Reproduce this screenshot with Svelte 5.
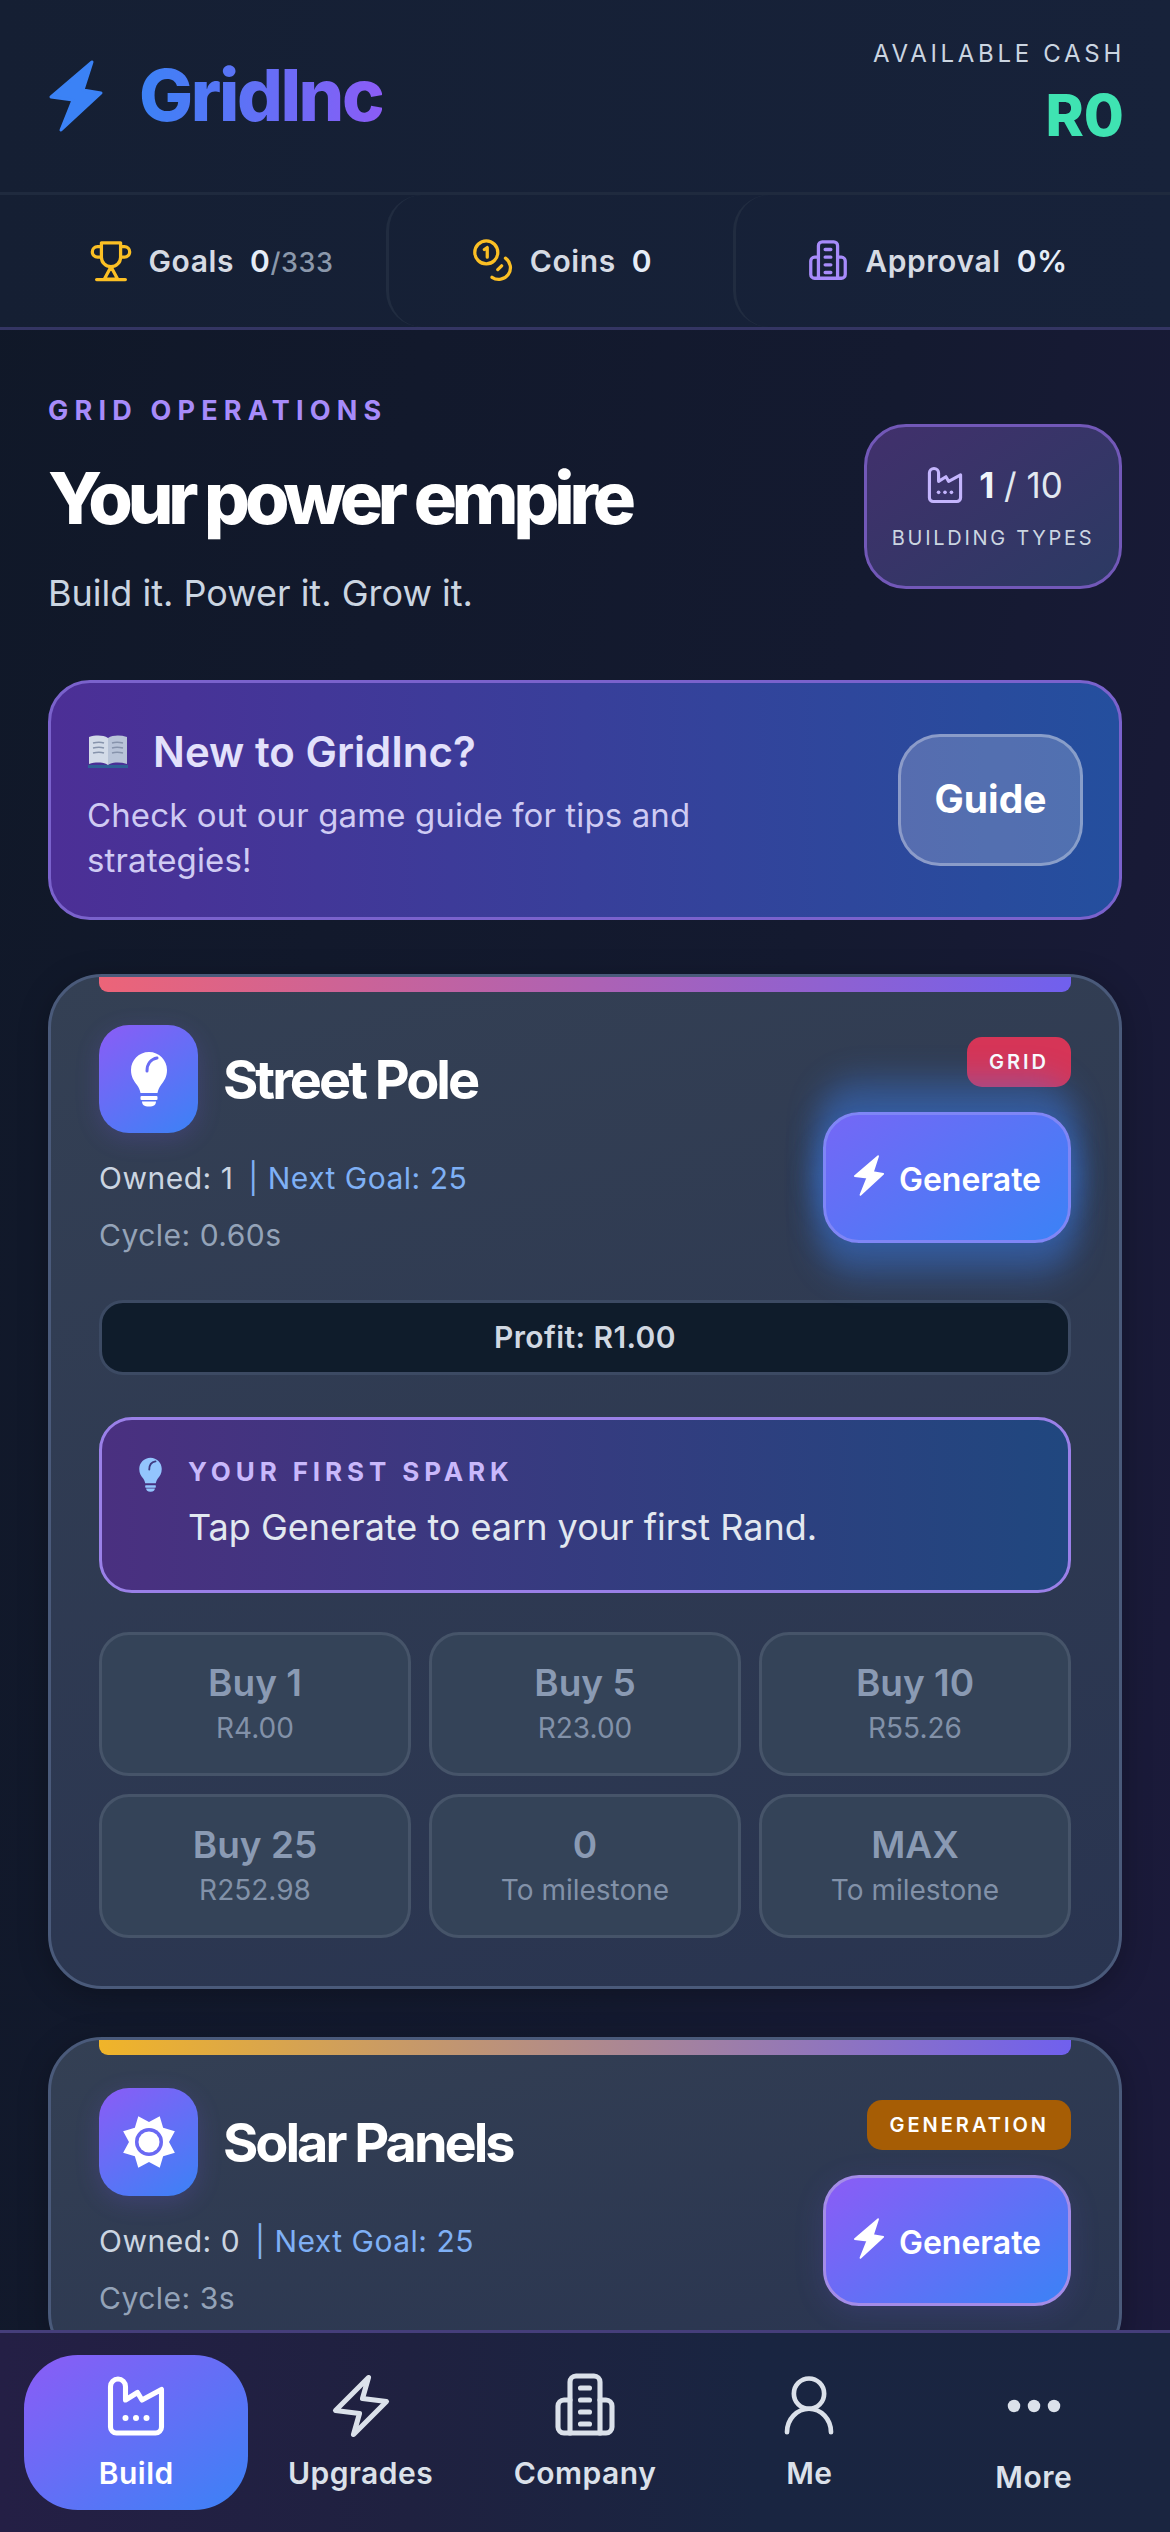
<script>
	const buys = [
		{ title: "Buy 1", sub: "R4.00" },
		{ title: "Buy 5", sub: "R23.00" },
		{ title: "Buy 10", sub: "R55.26" },
		{ title: "Buy 25", sub: "R252.98" },
		{ title: "0", sub: "To milestone" },
		{ title: "MAX", sub: "To milestone" }
	]

	const BOLT = "M44 2 3 37 25 40 13 70 53 33 35 30Z"

	function starPoints(cx, cy, outer, inner, count) {
		const pts = []
		for (let i = 0; i < count * 2; i++) {
			const r = i % 2 ? inner : outer
			const a = (Math.PI * i) / count - Math.PI / 2 + Math.PI / count
			pts.push(`${(cx + r * Math.cos(a)).toFixed(2)},${(cy + r * Math.sin(a)).toFixed(2)}`)
		}
		return pts.join(" ")
	}
</script>

{#snippet factory()}
	<svg class="line" viewBox="0 0 24 24">
		<path d="M3.500 19V5.500a2.500 2.500 0 0 1 5 0V10l4-2.500L14 10l6.500-3.500V19a2 2 0 0 1-2 2h-13a2 2 0 0 1-2-2Z" />
		<circle class="dot" cx="8.500" cy="16" r="1" />
		<circle class="dot" cx="12" cy="16" r="1" />
		<circle class="dot" cx="15.500" cy="16" r="1" />
	</svg>
{/snippet}

{#snippet building()}
	<svg class="line" viewBox="0 0 24 24">
		<path d="M7 21V4a2 2 0 0 1 2-2h6a2 2 0 0 1 2 2v17" />
		<path d="M7 10H5a2 2 0 0 0-2 2v7a2 2 0 0 0 2 2h14a2 2 0 0 0 2-2v-7a2 2 0 0 0-2-2h-2" />
		<path d="M10.500 6h3M10.500 10h3M10.500 14h3M10.500 18h3" />
	</svg>
{/snippet}

{#snippet bulb()}
	<svg class="bulb" viewBox="0 0 38 56">
		<path class="bulb-head" d="M19 1C9 1 1 9 1 19c0 7 3 11 6 15 2 3 3 5 3.500 8h17c.5-3 1.500-5 3.500-8 3-4 6-8 6-15C37 9 29 1 19 1Z" />
		<path class="bulb-cut" d="M27 7c-6 1-10 6-10 13" />
		<rect class="bulb-head" x="10.500" y="45" width="17" height="4" rx="1" />
		<path class="bulb-head" d="M12 50.500h14c0 3-2 5-7 5s-7-2-7-5Z" />
	</svg>
{/snippet}

<div class="page">
	<header class="topbar">
		<div class="brand">
			<svg class="brand-bolt" viewBox="0 0 56 72"><path d={BOLT} /></svg>
			<span class="brand-name">GridInc</span>
		</div>
		<div class="cash">
			<span class="cash-label">AVAILABLE CASH</span>
			<span class="cash-value">R0</span>
		</div>
	</header>

	<div class="stats">
		<div class="stat">
			<svg class="line gold" viewBox="0 0 24 24">
				<path d="M7 2.500h10v7.500a5 5 0 0 1-10 0Z" />
				<path d="M7 4.500H5a2.600 2.600 0 0 0 0 5.500h2M17 4.500h2a2.600 2.600 0 0 1 0 5.500h-2" />
				<path d="M12 15l-3.500 6.500h7L12 15ZM4.500 21.700h15" />
			</svg>
			<span class="stat-name">Goals</span>
			<span class="stat-val">0<small>/333</small></span>
		</div>
		<div class="stat">
			<svg class="line gold" viewBox="0 0 24 24">
				<circle cx="8.500" cy="7.500" r="6" />
				<path d="M7.500 6l1.500-1v5" />
				<path d="M18.500 10.500a6 6 0 0 1-7 10M14.500 16.500l2-2" />
			</svg>
			<span class="stat-name">Coins</span>
			<span class="stat-val">0</span>
		</div>
		<div class="stat">
			<span class="violet">{@render building()}</span>
			<span class="stat-name">Approval</span>
			<span class="stat-val">0%</span>
		</div>
	</div>

	<main class="content">
		<section class="hero">
			<div>
				<div class="eyebrow">GRID OPERATIONS</div>
				<h1>Your power empire</h1>
				<p>Build it. Power it. Grow it.</p>
			</div>
			<div class="types">
				<div class="types-count">
					{@render factory()}
					<span><b>1</b> / 10</span>
				</div>
				<div class="types-label">BUILDING TYPES</div>
			</div>
		</section>

		<section class="guide">
			<div class="guide-text">
				<h2>
					<svg class="book" viewBox="0 0 42 36">
						<path d="M1 31h40v3H1Z" fill="#2f5f96" />
						<path d="M2 3c7-2 14-2 19 1v27c-5-3-12-3-19-1Z" fill="#d3dbe8" />
						<path d="M40 3c-7-2-14-2-19 1v27c5-3 12-3 19-1Z" fill="#b9c4d8" />
						<path d="M6 9c4-1 8-1 11 0M6 14c4-1 8-1 11 0M6 19c4-1 8-1 11 0M25 9c3-1 7-1 11 0M25 14c3-1 7-1 11 0M25 19c3-1 7-1 11 0" stroke="#8794ac" stroke-width="1.500" fill="none" />
					</svg>
					New to GridInc?
				</h2>
				<p>Check out our game guide for tips and strategies!</p>
			</div>
			<button class="guide-btn">Guide</button>
		</section>

		<article class="card">
			<div class="strip strip-red"></div>
			<div class="card-top">
				<div class="card-info">
					<div class="card-title">
						<div class="card-icon">{@render bulb()}</div>
						<h3>Street Pole</h3>
					</div>
					<div class="meta">Owned: 1 <span class="next">| Next Goal: 25</span></div>
					<div class="meta dim">Cycle: 0.60s</div>
				</div>
				<div class="card-actions">
					<span class="tag tag-red">GRID</span>
					<button class="generate glow">
						<svg viewBox="0 0 56 72"><path d={BOLT} /></svg>
						Generate
					</button>
				</div>
			</div>

			<div class="profit">Profit: R1.00</div>

			<div class="spark">
				<div class="spark-icon">{@render bulb()}</div>
				<div>
					<div class="spark-title">YOUR FIRST SPARK</div>
					<div class="spark-text">Tap Generate to earn your first Rand.</div>
				</div>
			</div>

			<div class="buys">
				{#each buys as buy}
					<button class="buy">
						<span class="buy-title">{buy.title}</span>
						<span class="buy-sub">{buy.sub}</span>
					</button>
				{/each}
			</div>
		</article>

		<article class="card second">
			<div class="strip strip-gold"></div>
			<div class="card-top">
				<div class="card-info">
					<div class="card-title">
						<div class="card-icon">
							<svg class="sun" viewBox="0 0 56 56">
								<polygon points={starPoints(28, 28, 28, 20, 8)} fill="#fff" />
								<circle cx="28" cy="28" r="14" fill="#6a69f3" />
								<circle cx="28" cy="28" r="10.500" fill="#fff" />
							</svg>
						</div>
						<h3>Solar Panels</h3>
					</div>
					<div class="meta">Owned: 0 <span class="next">| Next Goal: 25</span></div>
					<div class="meta dim">Cycle: 3s</div>
				</div>
				<div class="card-actions">
					<span class="tag tag-gold">GENERATION</span>
					<button class="generate">
						<svg viewBox="0 0 56 72"><path d={BOLT} /></svg>
						Generate
					</button>
				</div>
			</div>
		</article>
	</main>

	<nav class="tabs">
		<button class="tab active">
			{@render factory()}
			<span>Build</span>
		</button>
		<button class="tab">
			<svg class="line" viewBox="0 0 24 24"><path d="M14.500 2.500 3.500 13.500 11.500 14.500 9.500 21.500 20.500 10.500 12.500 9.500Z" /></svg>
			<span>Upgrades</span>
		</button>
		<button class="tab">
			{@render building()}
			<span>Company</span>
		</button>
		<button class="tab me">
			<svg class="line" viewBox="0 0 24 24">
				<circle cx="12" cy="7.500" r="5.500" />
				<path d="M4 21.500a8 8.500 0 0 1 16 0" />
			</svg>
			<span>Me</span>
		</button>
		<button class="tab more">
			<svg class="line" viewBox="0 0 24 24">
				<circle class="dot" cx="4" cy="12" r="2.500" />
				<circle class="dot" cx="12" cy="12" r="2.500" />
				<circle class="dot" cx="20" cy="12" r="2.500" />
			</svg>
			<span>More</span>
		</button>
	</nav>
</div>

<style>
	:global(body) {
		background: #111827;
	}
	.page {
		position: relative;
		width: 1170px;
		height: 2532px;
		overflow: hidden;
		font-family: Inter, "Noto Sans", sans-serif;
		color: #e2e8f0;
		background: linear-gradient(100deg, #101828 0%, #141a30 60%, #1c1a3c 100%);
	}
	button {
		font-family: inherit;
		cursor: pointer;
	}
	h1,
	h2,
	h3,
	p {
		margin: 0;
	}

	.line {
		display: block;
		fill: none;
		stroke: currentColor;
		stroke-width: 1.7;
		stroke-linecap: round;
		stroke-linejoin: round;
	}
	.line .dot {
		fill: currentColor;
		stroke: none;
	}

	.topbar {
		display: flex;
		justify-content: space-between;
		height: 195px;
		box-sizing: border-box;
		padding: 42px 48px 0;
		background: linear-gradient(90deg, #151f33, #17223a);
		border-bottom: 3px solid #1f2a3e;
	}
	.brand {
		display: flex;
		align-items: flex-start;
		gap: 35px;
		margin-top: 18px;
	}
	.brand-bolt {
		width: 56px;
		height: 72px;
	}
	.brand-bolt path {
		fill: #3b82f6;
		stroke: #3b82f6;
		stroke-width: 3;
		stroke-linejoin: round;
	}
	.brand-name {
		font-size: 72px;
		line-height: 70px;
		font-weight: 800;
		letter-spacing: -2.400px;
		background: linear-gradient(90deg, #3b82f6, #8b5cf6);
		-webkit-background-clip: text;
		background-clip: text;
		color: transparent;
	}
	.cash {
		display: flex;
		flex-direction: column;
		align-items: flex-end;
	}
	.cash-label {
		margin-right: -3px;
		font-size: 24px;
		line-height: 24px;
		letter-spacing: 3.700px;
		color: #cbd5e1;
	}
	.cash-value {
		margin-top: 23px;
		margin-right: -2px;
		font-size: 58px;
		line-height: 52px;
		font-weight: 800;
		color: #3fe3b2;
	}

	.stats {
		display: grid;
		grid-template-columns: 350px 347px 404px;
		height: 132px;
		padding-left: 36px;
		background: linear-gradient(90deg, #151f33, #17223a);
		border-bottom: 3px solid #343563;
	}
	.stat {
		display: flex;
		align-items: center;
		justify-content: center;
		gap: 14px;
		font-size: 30px;
		font-weight: 600;
		letter-spacing: 0.6px;
		border-radius: 36px;
	}
	.stat + .stat {
		border-left: 3px solid #212c40;
	}
	.stat svg {
		width: 46px;
		height: 46px;
	}
	.stat-name {
		color: #d6dbe4;
	}
	.stat-val {
		margin-left: 2px;
		color: #e6edf8;
	}
	.stat-val small {
		font-size: 27px;
		font-weight: 500;
		color: #8b98ab;
	}
	.gold {
		color: #fbbf24;
	}
	.violet {
		color: #a78bfa;
	}

	.content {
		display: flex;
		flex-direction: column;
		padding: 66px 48px 0;
	}
	.hero {
		display: flex;
		justify-content: space-between;
		align-items: flex-start;
	}
	.eyebrow {
		font-size: 27px;
		line-height: 30px;
		font-weight: 700;
		letter-spacing: 6.200px;
		color: #a78bfa;
	}
	h1 {
		margin-top: 30px;
		font-size: 72px;
		line-height: 84px;
		font-weight: 800;
		letter-spacing: -5.100px;
		color: #fff;
	}
	.hero p {
		margin-top: 29px;
		font-size: 36px;
		line-height: 48px;
		color: #cbd5e1;
	}
	.types {
		box-sizing: border-box;
		width: 258px;
		height: 165px;
		margin-top: 28px;
		padding-top: 36px;
		border: 3px solid #7258b8;
		border-radius: 42px;
		background: linear-gradient(145deg, #41306c, #2c3a63);
		text-align: center;
	}
	.types-count {
		display: flex;
		justify-content: center;
		align-items: center;
		gap: 12px;
		font-size: 35px;
		color: #e2e8f0;
	}
	.types-count svg {
		width: 44px;
		height: 44px;
		color: #c4b5fd;
	}
	.types-count b {
		font-weight: 700;
		color: #f1f5f9;
	}
	.types-label {
		margin-top: 19px;
		font-size: 20px;
		letter-spacing: 2.700px;
		color: #cbd5e1;
	}

	.guide {
		display: flex;
		align-items: center;
		justify-content: space-between;
		box-sizing: border-box;
		height: 240px;
		margin-top: 63px;
		padding: 0 36px;
		border: 3px solid #7a62cc;
		border-radius: 42px;
		background: linear-gradient(90deg, #4c2f96, #244f9e);
	}
	.guide-text {
		width: 690px;
		padding-top: 8px;
	}
	.guide h2 {
		display: flex;
		align-items: center;
		gap: 24px;
		font-size: 42px;
		line-height: 54px;
		font-weight: 600;
		color: #e3e1fb;
	}
	.book {
		width: 42px;
		height: 36px;
	}
	.guide p {
		margin-top: 14px;
		font-size: 33px;
		line-height: 45px;
		letter-spacing: 0.12px;
		color: #cfcbf3;
	}
	.guide-btn {
		width: 185px;
		height: 132px;
		padding-bottom: 4px;
		border: 3px solid rgba(255, 255, 255, 0.32);
		border-radius: 42px;
		background: rgba(255, 255, 255, 0.2);
		color: #fff;
		font-size: 39px;
		font-weight: 700;
	}

	.card {
		position: relative;
		box-sizing: border-box;
		margin-top: 54px;
		padding: 48px 48px 48px;
		border: 3px solid #4a5a7a;
		border-radius: 54px;
		background: linear-gradient(165deg, #344054, #293450);
		box-shadow: 0 6px 30px rgba(0, 0, 0, 0.25);
	}
	.second {
		margin-top: 48px;
	}
	.strip {
		position: absolute;
		top: 0;
		left: 48px;
		right: 48px;
		height: 15px;
		border-radius: 0 0 9px 9px;
	}
	.strip-red {
		background: linear-gradient(90deg, #ec6478, #7060ee);
	}
	.strip-gold {
		background: linear-gradient(90deg, #f0b429, #7060ee);
	}
	.card-top {
		display: flex;
		justify-content: space-between;
	}
	.card-title {
		display: flex;
		align-items: center;
		gap: 25px;
	}
	.card-icon {
		display: flex;
		align-items: center;
		justify-content: center;
		width: 99px;
		height: 108px;
		border-radius: 30px;
		background: linear-gradient(145deg, #8b5cf6, #3b82f6);
		box-shadow: 0 6px 24px rgba(124, 92, 246, 0.2);
	}
	.bulb {
		display: block;
		width: 38px;
		height: 56px;
	}
	.bulb-head {
		fill: #fff;
	}
	.bulb-cut {
		fill: none;
		stroke: #6a6cf4;
		stroke-width: 3;
		stroke-linecap: round;
	}
	.sun {
		width: 56px;
		height: 56px;
	}
	h3 {
		font-size: 54px;
		font-weight: 700;
		letter-spacing: -3px;
		color: #fff;
	}
	.meta {
		margin-top: 24px;
		font-size: 30px;
		line-height: 36px;
		letter-spacing: 0.5px;
		color: #cbd5e1;
	}
	.card-title + .meta {
		margin-top: 27px;
	}
	.dim {
		margin-top: 21px;
		color: #94a3b8;
	}
	.next {
		margin-left: 6px;
		color: #7fb0f5;
	}
	.card-actions {
		display: flex;
		flex-direction: column;
		align-items: flex-end;
		padding-top: 12px;
	}
	.tag {
		padding: 0 22px;
		height: 50px;
		line-height: 50px;
		border-radius: 15px;
		font-size: 20px;
		font-weight: 600;
		letter-spacing: 3px;
		color: #fff;
	}
	.tag-red {
		background: #d63557;
	}
	.tag-gold {
		background: #a65d05;
	}
	.generate {
		position: relative;
		display: flex;
		align-items: center;
		justify-content: center;
		gap: 14px;
		width: 248px;
		height: 131px;
		margin-top: 25px;
		padding: 4px 0 0;
		border: 3px solid #a48ce8;
		border-radius: 36px;
		background: linear-gradient(145deg, #8b5cf6, #3b82f6);
		color: #fff;
		font-size: 32px;
		font-weight: 600;
		box-shadow: 0 6px 30px rgba(124, 92, 246, 0.15);
	}
	.generate svg {
		width: 32px;
		height: 41px;
		margin-top: -8px;
		fill: #fff;
		stroke: #fff;
		stroke-width: 3;
		stroke-linejoin: round;
	}
	.glow {
		border-color: #7f86f6;
		background: linear-gradient(145deg, #7567f6, #3b82f6);
		box-shadow:
			0 30px 30px 6px rgba(59, 130, 246, 0.3),
			0 -30px 30px 6px rgba(59, 130, 246, 0.3),
			0 0 30px 8px rgba(59, 130, 246, 0.3);
	}
	.profit {
		box-sizing: border-box;
		height: 75px;
		margin-top: 47px;
		border: 3px solid #3c4a63;
		border-radius: 24px;
		background: #0f1c2b;
		font-size: 30px;
		font-weight: 600;
		line-height: 69px;
		letter-spacing: 0.4px;
		text-align: center;
		color: #d1d8e2;
	}
	.spark {
		display: flex;
		gap: 25px;
		box-sizing: border-box;
		height: 176px;
		margin-top: 42px;
		padding: 36px 0 0 36px;
		border: 3px solid #9a80e8;
		border-radius: 33px;
		background: linear-gradient(90deg, #4a3080, #20477f);
	}
	.spark-icon {
		padding-top: 1px;
	}
	.spark-icon .bulb {
		width: 25px;
		height: 35px;
	}
	.spark-icon .bulb-head {
		fill: #93c5fd;
	}
	.spark-icon .bulb-cut {
		stroke: #3e3a80;
	}
	.spark-title {
		font-size: 26px;
		line-height: 32px;
		font-weight: 700;
		letter-spacing: 4.900px;
		color: #c9b8fb;
	}
	.spark-text {
		margin-top: 16px;
		font-size: 36px;
		line-height: 46px;
		color: #e2e8f0;
	}
	.buys {
		display: grid;
		grid-template-columns: repeat(3, 1fr);
		gap: 18px;
		margin-top: 39px;
	}
	.buy {
		display: flex;
		flex-direction: column;
		align-items: center;
		box-sizing: border-box;
		height: 144px;
		padding: 26px 0 0;
		border: 3px solid #465469;
		border-radius: 30px;
		background: #344358;
	}
	.buy-title {
		font-size: 37px;
		line-height: 44px;
		font-weight: 600;
		color: #8a9ab3;
	}
	.buy-sub {
		margin-top: 6px;
		font-size: 28px;
		line-height: 34px;
		color: #8291a8;
	}

	.tabs {
		position: absolute;
		left: 0;
		right: 0;
		bottom: 0;
		display: grid;
		grid-template-columns: repeat(5, 1fr);
		box-sizing: border-box;
		height: 202px;
		padding: 22px 24px 22px;
		border-top: 3px solid #453e7a;
		background: linear-gradient(90deg, #241f45, #1f2140 35%, #192541 65%, #1a2540);
	}
	.tab {
		display: flex;
		flex-direction: column;
		align-items: center;
		padding: 21px 0 0;
		border: 0;
		border-radius: 54px;
		background: none;
		color: #dbe1ea;
		font-size: 30px;
		font-weight: 600;
		letter-spacing: 0.5px;
	}
	.tab svg {
		width: 72px;
		height: 72px;
		margin: -6px;
	}
	.tab span {
		margin-top: 19px;
		line-height: 36px;
	}
	.tab.active {
		background: linear-gradient(145deg, #8b5cf6, #3b82f6);
		color: #fff;
	}
	.tab.me svg {
		width: 66px;
		height: 66px;
		margin: -3px;
	}
	.tab.more svg {
		width: 60px;
		height: 60px;
		margin: 0;
	}
	.tab.more span {
		margin-top: 23px;
	}
</style>
